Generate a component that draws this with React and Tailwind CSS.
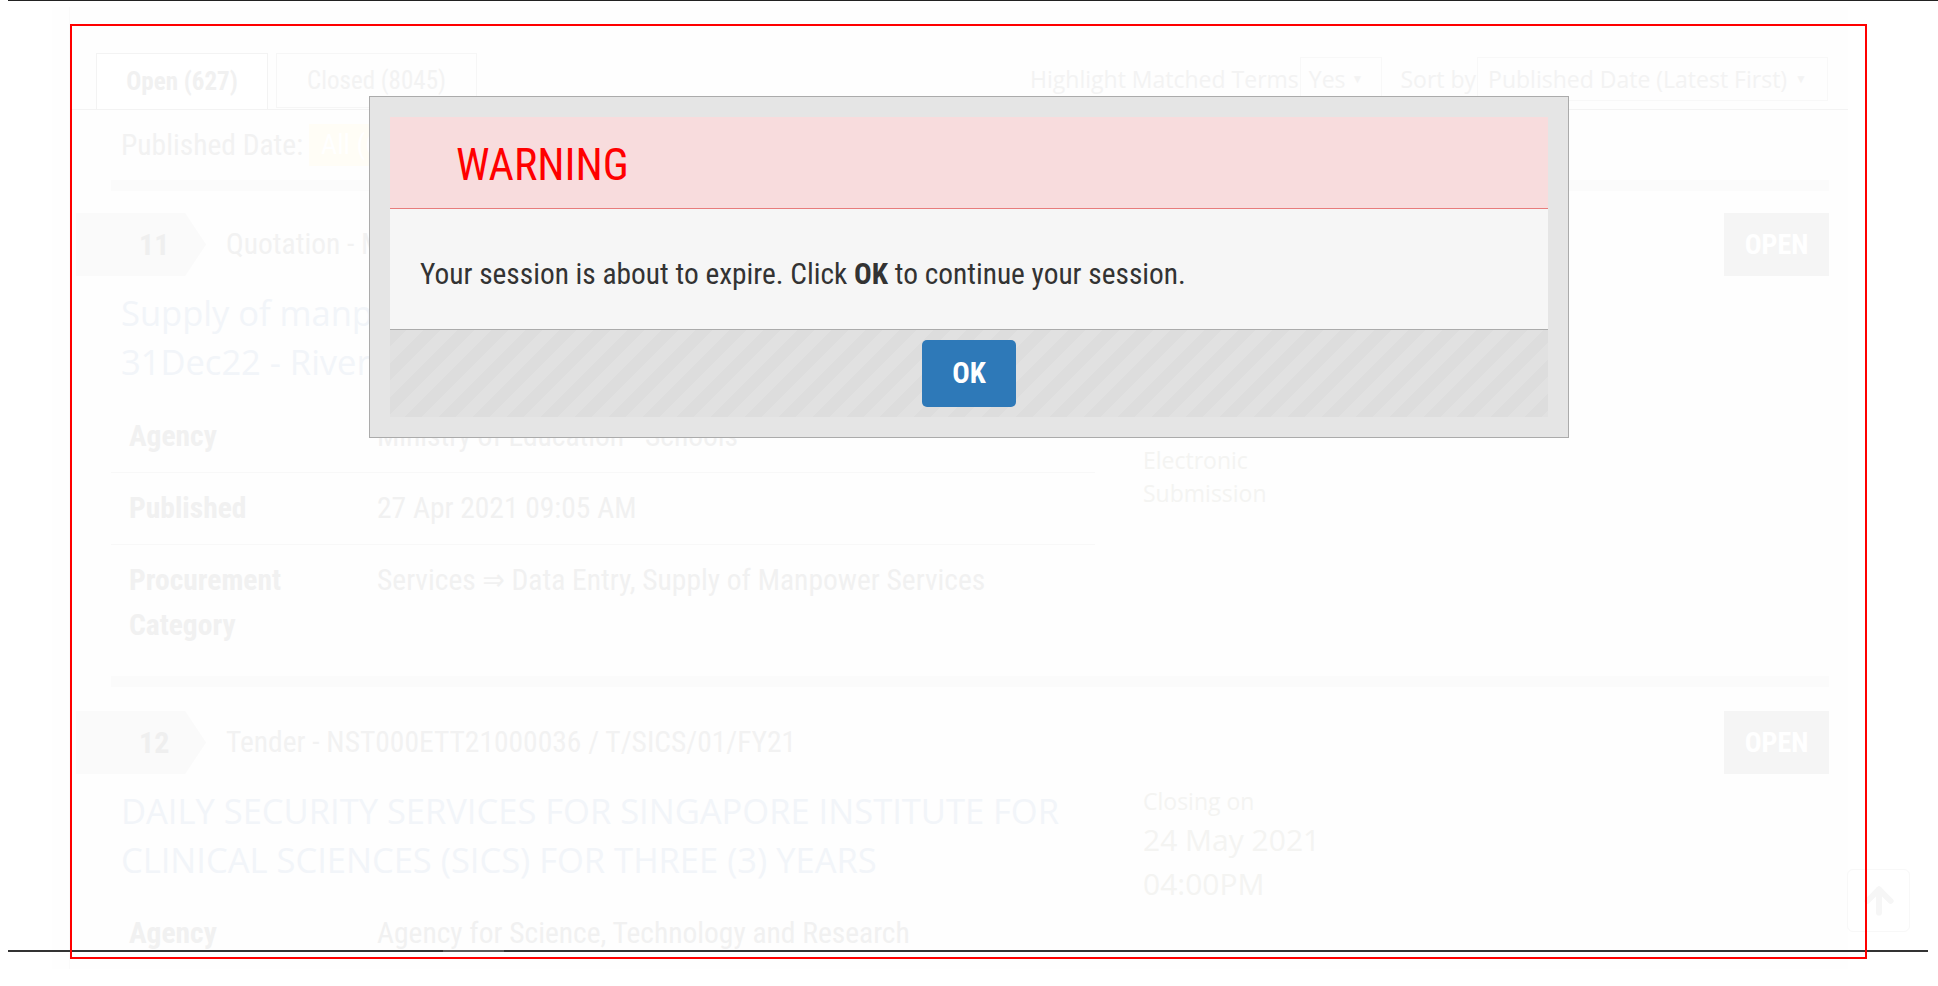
import { ArrowUp } from 'lucide-react'

const cond = "font-['Roboto_Condensed','Liberation_Sans_Narrow','DejaVu_Sans_Condensed',Roboto,sans-serif]"
const open = "font-['Open_Sans','Noto_Sans',sans-serif]"

const Row = ({ label, children, border = true }) => (
  <div className={`flex py-[13px] ${border ? 'border-b border-[#f8f8f8]' : ''}`}>
    <div className={`w-[266px] shrink-0 pl-[18px] text-[29.5px] leading-[45px] font-bold text-[#f1f1f1] ${cond}`}>{label}</div>
    <div className={`text-[29.5px] leading-[45px] text-[#f1f1f1] ${cond}`}>{children}</div>
  </div>
)

const Badge = ({ n }) => (
  <div className={`flex h-[63px] w-[130px] items-center bg-[#fafafa] pl-[63px] text-[30px] font-bold text-[#efefef] [clip-path:polygon(0_0,84%_0,100%_50%,84%_100%,0_100%)] ${cond}`}>
    {n}
  </div>
)

const OpenTag = () => (
  <div className={`flex h-[63px] w-[105px] items-center justify-center bg-[#f5f5f5] text-[28px] font-bold text-white ${cond}`}>
    OPEN
  </div>
)

const ItemHead = ({ n, text }) => (
  <div className="flex items-center pr-[19px]">
    <div className="ml-[6px]"><Badge n={n} /></div>
    <div className={`ml-[20px] text-[29.5px] text-[#f2f2f2] ${cond}`}>{text}</div>
    <div className="ml-auto"><OpenTag /></div>
  </div>
)

export default function App() {
  return (
    <div className="relative h-[986px] w-[1938px] overflow-hidden bg-white">
      <div className="ml-[8px] h-px bg-[#222]" />

      {/* faded page behind the dialog */}
      <div className="ml-[52px] mt-[6px] w-[1796px] bg-[#fefefe] pl-[17px]">
        <div className="w-[1779px] border-l border-[#fafafa] pt-[46px]">
          {/* tabs + sort */}
          <div className="flex items-end border-b border-[#f3f3f3] pl-[26px] pr-[20px]">
            <div className={`flex h-[56px] w-[172px] items-center justify-center border border-b-0 border-[#f3f3f3] bg-white text-[25px] font-bold text-[#f1f1f1] ${cond}`}>
              Open (627)
            </div>
            <div className={`ml-[8px] mb-[1px] flex h-[55px] w-[201px] items-center justify-center border border-[#f6f6f6] text-[25px] text-[#f3f3f3] ${cond}`}>
              Closed (8045)
            </div>
            <div className={`ml-auto flex items-center pb-[8px] text-[23px] text-[#f3f3f3] ${open}`}>
              <span>Highlight Matched Terms</span>
              <span className="ml-[1px] flex h-[44px] items-center border border-[#f8f8f8] pl-[8px] pr-[18px]">Yes <span className="ml-[6px] text-[12px]">▼</span></span>
              <span className="ml-[18px]">Sort by</span>
              <span className="ml-[1px] flex h-[44px] items-center border border-[#f8f8f8] pl-[10px] pr-[20px]">Published Date (Latest First) <span className="ml-[8px] text-[12px]">▼</span></span>
            </div>
          </div>

          <div className="flex h-[70px] items-center pl-[51px]">
            <span className={`text-[29.5px] text-[#f2f2f2] ${cond}`}>Published Date:</span>
            <span className={`ml-[6px] flex h-[42px] items-center bg-[#fffdf6] px-[12px] text-[28px] text-white ${cond}`}>All (627)</span>
          </div>
          <div className="ml-[41px] h-[11px] w-[1718px] bg-[#fbfbfb]" />

          {/* item 11 */}
          <div className="mt-[22px]">
            <ItemHead n="11" text="Quotation - MOESCHETQ21000712 / 31Dec22" />
          </div>
          <div className="flex">
            <div className="ml-[41px] w-[984px]">
              <div className={`ml-[10px] mt-[12px] text-[34.5px] leading-[49px] text-[#f2f5f9] ${open}`}>
                Supply of manpower services for data entry from<br />31Dec22 - River Valley High School
              </div>
              <div className="mt-[15px]">
                <Row label="Agency">Ministry of Education - Schools</Row>
                <Row label="Published">27 Apr 2021 09:05 AM</Row>
                <Row label={<>Procurement<br />Category</>} border={false}>
                  Services ⇒ Data Entry, Supply of Manpower Services
                </Row>
              </div>
            </div>
            <div className={`ml-[48px] mt-[10px] text-[#f4f4f2] ${open}`}>
              <div className="text-[23px] leading-[34px]">Closing on</div>
              <div className="text-[30px] leading-[44px]">18 May 2021</div>
              <div className="text-[30px] leading-[44px]">04:00PM</div>
              <div className="mt-[36px] text-[23px] leading-[33px]">Electronic<br />Submission</div>
            </div>
          </div>
          <div className="ml-[41px] mt-[15px] h-[11px] w-[1718px] bg-[#fbfbfb]" />

          {/* item 12 */}
          <div className="mt-[24px]">
            <ItemHead n="12" text="Tender - NST000ETT21000036 / T/SICS/01/FY21" />
          </div>
          <div className="flex">
            <div className="ml-[41px] w-[984px]">
              <div className={`ml-[10px] mt-[12px] whitespace-nowrap text-[34.5px] leading-[49px] text-[#f2f5f9] ${open}`}>
                DAILY SECURITY SERVICES FOR SINGAPORE INSTITUTE FOR<br />CLINICAL SCIENCES (SICS) FOR THREE (3) YEARS
              </div>
              <div className="mt-[14px]">
                <Row label="Agency" border={false}>Agency for Science, Technology and Research</Row>
              </div>
            </div>
            <div className={`ml-[48px] mt-[10px] text-[#f4f4f2] ${open}`}>
              <div className="text-[23px] leading-[34px]">Closing on</div>
              <div className="text-[30px] leading-[44px]">24 May 2021</div>
              <div className="text-[30px] leading-[44px]">04:00PM</div>
            </div>
          </div>
        </div>
      </div>

      {/* back to top */}
      <div className="absolute left-[1847px] top-[869px] flex h-[63px] w-[63px] items-center justify-center rounded-[6px] border border-[#f8f8f8] text-[#f6f6f6]">
        <ArrowUp className="h-[40px] w-[40px]" strokeWidth={3.5} />
      </div>

      {/* window bottom edge with scroll thumb */}
      <div className="absolute left-[8px] top-[950px] flex h-[2px] w-[1920px] bg-[#333]">
        <div className="ml-[435px] h-full w-[61px] bg-[#5a5a5a]" />
      </div>

      {/* annotation frame */}
      <div className="absolute left-[70px] top-[24px] h-[935px] w-[1797px] border-2 border-[#ff0000]" />

      {/* session dialog */}
      <div className="absolute left-[369px] top-[96px] w-[1200px] border border-[#ababab] bg-[#e5e5e5] p-[20px]">
        <div className="flex h-[92px] items-center border-b border-[#e87c7c] bg-[#f8dcdd] pl-[66px] pt-[4px]">
          <h2 className={`text-[44px] leading-none text-[#ff0000] ${cond}`}>WARNING</h2>
        </div>
        <div className={`flex h-[121px] items-center border-b border-[#ababab] bg-[#f6f6f6] pl-[30px] pt-[11px] text-[29.4px] text-[#333] ${cond}`}>
          <p>Your session is about to expire. Click <b>OK</b> to continue your session.</p>
        </div>
        <div className="flex h-[87px] items-center justify-center bg-[repeating-linear-gradient(135deg,#dddddd_0,#dddddd_12px,#e1e1e1_12px,#e1e1e1_24px)]">
          <button className={`h-[67px] w-[94px] rounded-[5px] bg-[#2e79b8] text-[29px] font-bold text-white ${cond}`}>
            OK
          </button>
        </div>
      </div>
    </div>
  )
}
